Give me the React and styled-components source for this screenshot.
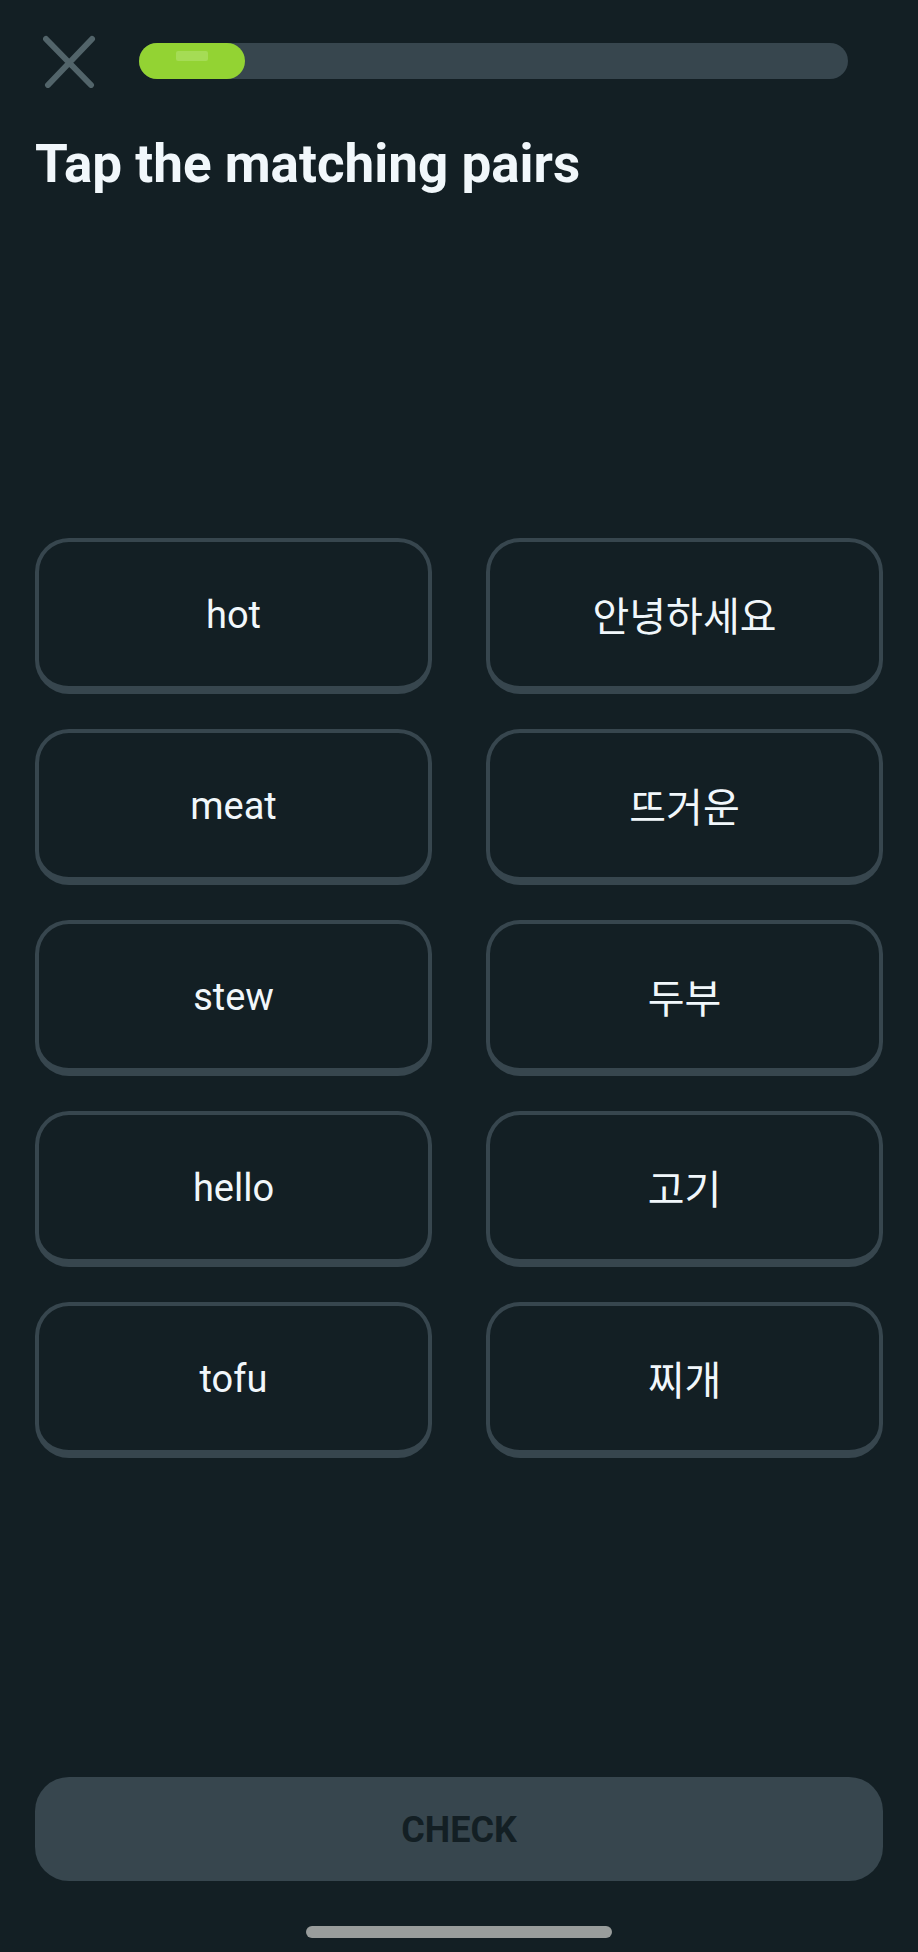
import React, { useState } from "react";
import styled, { createGlobalStyle } from "styled-components";

const color = {
  page: "#131f24",
  line: "#37464e",
  icon: "#52646a",
  text: "#f1f7fb",
  green: "#93d333",
  shine: "#a5dc55",
  handle: "#999d9c",
};

const GlobalStyle = createGlobalStyle`
  *, *::before, *::after { box-sizing: border-box; }
  body {
    margin: 0;
    background: ${color.page};
    color: ${color.text};
    font-family: Roboto, "Noto Sans CJK KR", sans-serif;
  }
  button { font-family: inherit; cursor: pointer; }
`;

const Page = styled.div`
  display: flex;
  flex-direction: column;
  min-height: 100vh;
  padding: 32px 35px 14px;
`;

const Header = styled.header`
  display: flex;
  align-items: center;
  gap: 34px;
  padding-right: 35px;
`;

const CloseButton = styled.button`
  display: flex;
  align-items: center;
  justify-content: center;
  flex: none;
  width: 70px;
  height: 58px;
  padding: 0;
  border: 0;
  background: none;
  color: ${color.icon};
`;

const Track = styled.div`
  flex: 1;
  height: 36px;
  border-radius: 18px;
  background: ${color.line};
`;

const Fill = styled.div`
  display: flex;
  justify-content: center;
  height: 100%;
  padding-top: 8px;
  border-radius: 18px;
  background: ${color.green};
`;

const Shine = styled.span`
  width: 32px;
  height: 10px;
  border-radius: 2px;
  background: ${color.shine};
`;

const Title = styled.h1`
  margin: 44px 0 25px;
  font-size: 53px;
  line-height: 60px;
  font-weight: 700;
`;

const Main = styled.main`
  flex: 1;
  display: flex;
  flex-direction: column;
  justify-content: center;
`;

const Pairs = styled.div`
  display: grid;
  grid-template-columns: 1fr 1fr;
  gap: 35px 54px;
`;

const Card = styled.button`
  height: 156px;
  padding: ${(p) => (p.lang === "ko" ? "8px 16px 0" : "2px 16px 0")};
  border: 4px solid ${color.line};
  border-bottom-width: 8px;
  border-radius: 34px;
  background: ${(p) => (p["aria-pressed"] ? "#202f36" : "transparent")};
  color: ${color.text};
  font-size: ${(p) => (p.lang === "ko" ? "40px" : "38px")};
  line-height: 48px;
  font-weight: 400;
`;

const Footer = styled.footer`
  display: flex;
  flex-direction: column;
  align-items: center;
  gap: 45px;
`;

const CheckButton = styled.button`
  width: 100%;
  height: 104px;
  padding: 2px 16px 0;
  border: 0;
  border-radius: 34px;
  background: ${color.line};
  color: ${color.page};
  font-size: 36px;
  line-height: 44px;
  font-weight: 700;
`;

const HomeHandle = styled.div`
  width: 36%;
  height: 12px;
  border-radius: 6px;
  background: ${color.handle};
`;

const pairs = [
  ["hot", "안녕하세요"],
  ["meat", "뜨거운"],
  ["stew", "두부"],
  ["hello", "고기"],
  ["tofu", "찌개"],
];

const progress = 15;

export default function App() {
  const [selected, setSelected] = useState(null);

  const renderCard = (word, lang) => (
    <Card
      key={word}
      type="button"
      lang={lang}
      aria-pressed={selected === word}
      onClick={() => setSelected(selected === word ? null : word)}
    >
      {word}
    </Card>
  );

  return (
    <>
      <GlobalStyle />
      <Page>
        <Header>
          <CloseButton type="button" aria-label="Close">
            <svg
              width="54"
              height="54"
              viewBox="0 0 54 54"
              fill="none"
              stroke="currentColor"
              strokeWidth="6"
              strokeLinecap="round"
              aria-hidden="true"
            >
              <path d="M3 5 L48 51 M49 5 L5 51" />
            </svg>
          </CloseButton>
          <Track
            role="progressbar"
            aria-label="Lesson progress"
            aria-valuemin={0}
            aria-valuemax={100}
            aria-valuenow={progress}
          >
            <Fill style={{ width: `${progress}%` }}>
              <Shine />
            </Fill>
          </Track>
        </Header>
        <Title>Tap the matching pairs</Title>
        <Main>
          <Pairs>
            {pairs.flatMap(([english, korean]) => [
              renderCard(english, "en"),
              renderCard(korean, "ko"),
            ])}
          </Pairs>
        </Main>
        <Footer>
          <CheckButton type="button" disabled>
            CHECK
          </CheckButton>
          <HomeHandle />
        </Footer>
      </Page>
    </>
  );
}
